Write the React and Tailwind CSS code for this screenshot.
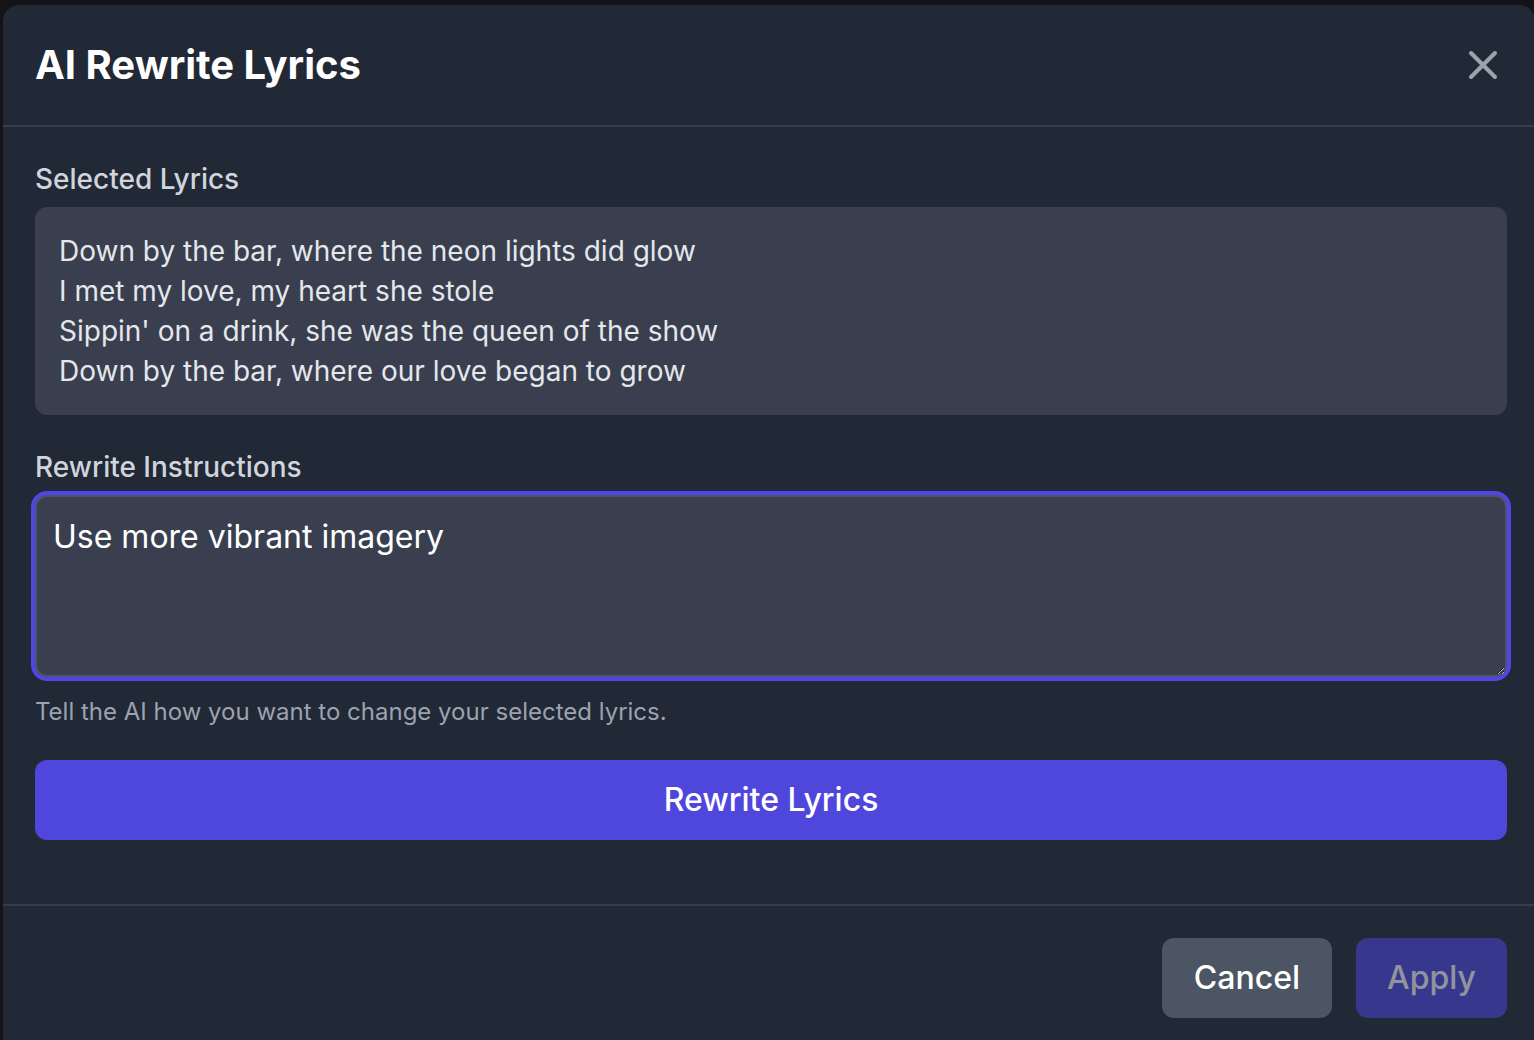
import { X } from "lucide-react";

const lyrics = [
  "Down by the bar, where the neon lights did glow",
  "I met my love, my heart she stole",
  "Sippin' on a drink, she was the queen of the show",
  "Down by the bar, where our love began to grow",
];

export default function App() {
  return (
    <div
      className="h-[1040px] overflow-hidden bg-[#121418] pt-[5px] pl-[3px]"
      style={{ fontFamily: "Inter, 'Noto Sans', sans-serif" }}
    >
      <div className="w-[1532px] rounded-[16px] bg-[#212836] text-white">
        {/* header */}
        <div className="flex items-center justify-between border-b-2 border-[#363e4d] pt-[32px] pb-[32px] pl-[32px] pr-[28px]">
          <h2 className="text-[40px] leading-[56px] font-bold">AI Rewrite Lyrics</h2>
          <button className="text-[#9ca3af]">
            <X size={48} strokeWidth={2} />
          </button>
        </div>

        {/* body */}
        <div className="flex flex-col gap-[32px] pt-[32px] pb-[64px] pl-[32px] pr-[28px]">
          <div>
            <label className="block text-[28px] leading-[40px] font-medium text-[#d1d5db] mb-[8px]">
              Selected Lyrics
            </label>
            <div className="rounded-[12px] bg-[#393f4f] p-[24px] text-[28px] leading-[40px] text-[#e5e7eb]">
              {lyrics.map((line) => (
                <div key={line}>{line}</div>
              ))}
            </div>
          </div>

          <div>
            <label className="block text-[28px] leading-[40px] font-medium text-[#d1d5db] mb-[8px]">
              Rewrite Instructions
            </label>
            <textarea
              defaultValue="Use more vibrant imagery"
              className="block w-full h-[182px] rounded-[12px] border-2 border-[#4b5563] bg-[#393f4f] p-[16px] text-[32px] leading-[48px] text-white outline-none shadow-[0_0_0_4px_#4f46e5]"
            />
            <p className="mt-[19px] text-[24px] leading-[32px] text-[#9ca3af]">
              Tell the AI how you want to change your selected lyrics.
            </p>
          </div>

          <button className="h-[80px] w-full rounded-[12px] bg-[#4f46dc] text-[32px] font-medium text-white">
            Rewrite Lyrics
          </button>
        </div>

        {/* footer */}
        <div className="flex justify-end gap-[24px] border-t-2 border-[#363e4d] pt-[32px] pb-[40px] pl-[32px] pr-[28px]">
          <button className="h-[80px] rounded-[12px] bg-[#4b5563] px-[32px] text-[32px] font-medium text-white">
            Cancel
          </button>
          <button
            disabled
            className="h-[80px] rounded-[12px] bg-[#4f46e5] px-[31px] text-[32px] font-medium text-white opacity-50"
          >
            Apply
          </button>
        </div>
      </div>
    </div>
  );
}
